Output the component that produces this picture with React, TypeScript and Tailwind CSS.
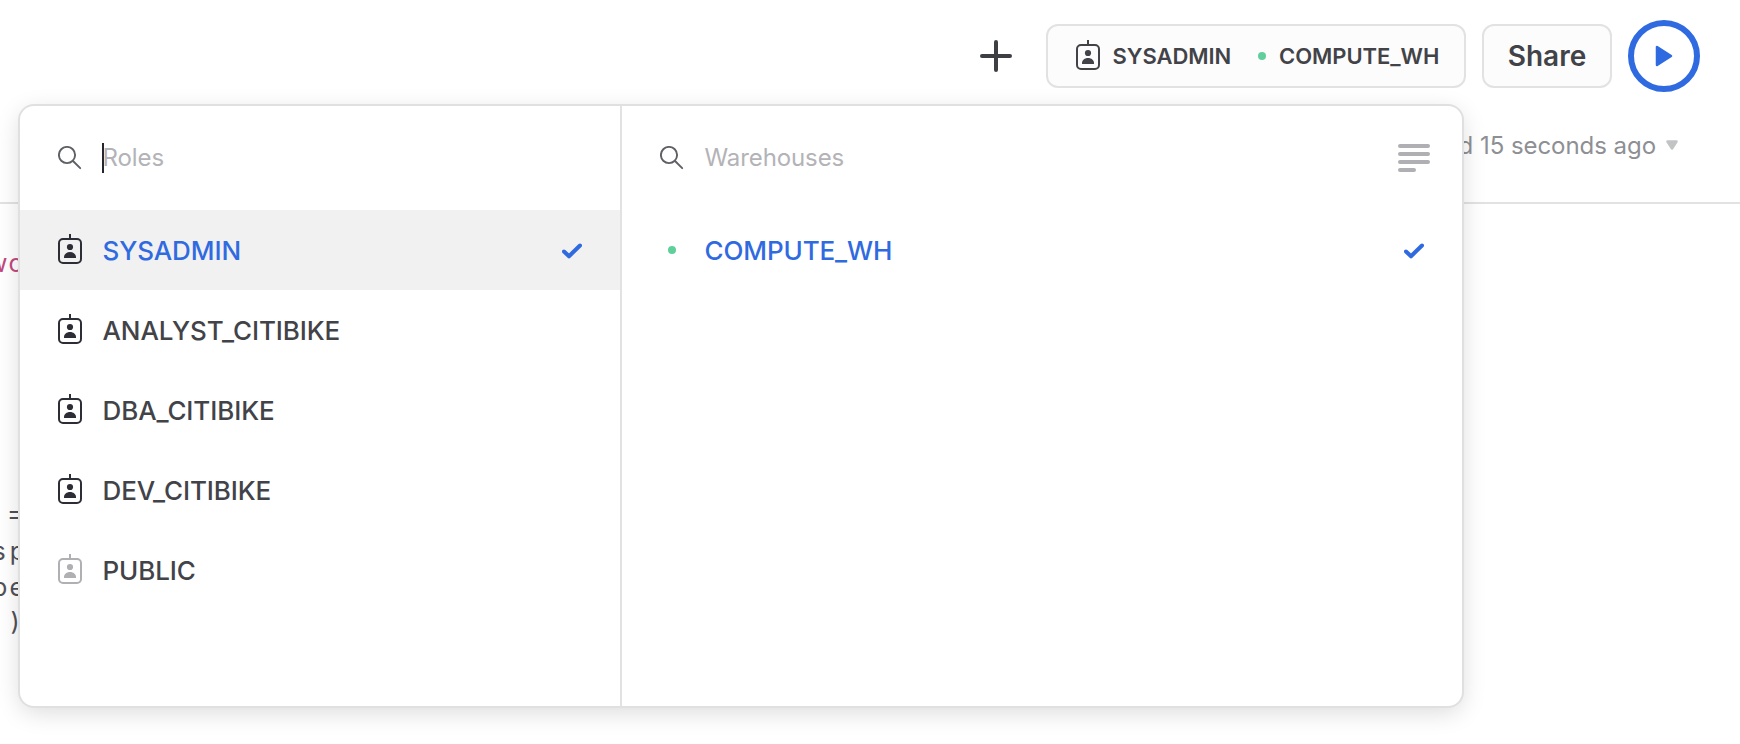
type Role = { name: string; selected?: boolean; muted?: boolean };

const roles: Role[] = [
  { name: "SYSADMIN", selected: true },
  { name: "ANALYST_CITIBIKE" },
  { name: "DBA_CITIBIKE" },
  { name: "DEV_CITIBIKE" },
  { name: "PUBLIC", muted: true },
];

function BadgeIcon({ className = "" }: { className?: string }) {
  return (
    <svg className={`shrink-0 ${className}`} width="24" height="30" viewBox="0 0 24 30" fill="none">
      <rect x="1" y="5" width="22" height="24" rx="4" stroke="currentColor" strokeWidth="2" />
      <path d="M12 0v5" stroke="currentColor" strokeWidth="2" />
      <circle cx="12" cy="13" r="3.1" fill="currentColor" />
      <path d="M6 24v-1c0-2.800 2.600-5 6-5s6 2.200 6 5v1z" fill="currentColor" />
    </svg>
  );
}

function SearchIcon() {
  return (
    <svg className="shrink-0 text-[#5f6066]" width="24" height="24" viewBox="0 0 24 24" fill="none">
      <circle cx="9" cy="9" r="8.100" stroke="currentColor" strokeWidth="1.900" />
      <path d="M15 15l7.200 7.200" stroke="currentColor" strokeWidth="1.900" strokeLinecap="round" />
    </svg>
  );
}

function CheckIcon() {
  return (
    <svg className="mt-px shrink-0 text-[#2f6ae1]" width="20" height="16" viewBox="0 0 20 16" fill="none">
      <path d="M2 8.500l5 4.800L18 2.500" stroke="currentColor" strokeWidth="4" strokeLinecap="round" strokeLinejoin="round" />
    </svg>
  );
}

function Dot() {
  return <span className="size-2 shrink-0 rounded-full bg-[#61cf9c]" />;
}

function Header() {
  return (
    <header className="flex h-28 items-center justify-end pr-10">
      <svg className="mr-[34px] text-[#3e3f45]" width="32" height="32" viewBox="0 0 32 32" fill="none">
        <path d="M16 2v28M2 16h28" stroke="currentColor" strokeWidth="4" strokeLinecap="round" />
      </svg>
      <button className="mr-4 flex h-16 w-[420px] items-center rounded-xl border-2 border-[#e2e2e2] bg-[#fcfcfc] pl-7 text-[22px] font-semibold tracking-[-0.05px]">
        <BadgeIcon className="-mt-0.5" />
        <span className="ml-[12.5px] w-[145.5px] text-left">SYSADMIN</span>
        <Dot />
        <span className="ml-[13px]">COMPUTE_WH</span>
      </button>
      <button className="mr-4 h-16 w-[130px] rounded-xl border-2 border-[#e2e2e2] bg-[#fcfcfc] text-[28px] font-semibold">
        Share
      </button>
      <button className="flex size-[72px] items-center justify-center rounded-full border-6 border-[#2f6ae1] bg-white">
        <svg width="18" height="22" viewBox="0 0 18 22" className="text-[#2f6ae1]">
          <path d="M2 2v18L16 11z" fill="currentColor" stroke="currentColor" strokeWidth="2.500" strokeLinejoin="round" />
        </svg>
      </button>
    </header>
  );
}

function Menu() {
  return (
    <div className="absolute top-[106px] left-5 flex h-[600px] w-[1442px] overflow-hidden rounded-[14px] bg-white shadow-[0_0_0_2px_#e0e0e0,0_6px_24px_rgba(0,0,0,0.15)]">
      <section className="w-[602px] border-r-2 border-[#e2e2e2]">
        <div className="flex h-[104px] items-center pl-[38px]">
          <SearchIcon />
          <span className="-mr-[1.5px] ml-5 h-[30px] w-0.5 bg-[#25262c]" />
          <span className="text-2xl tracking-[-0.1px] text-[#b3b3b7]">Roles</span>
        </div>
        {roles.map((r) => (
          <div key={r.name} className={`flex h-20 items-center pr-[38px] pl-[38px] ${r.selected ? "bg-[#f1f1f1]" : ""}`}>
            <BadgeIcon className={r.muted ? "-mt-0.5 text-[#b0b0b4]" : "-mt-0.5 text-[#2d2e35]"} />
            <span className={`ml-[20.5px] flex-1 text-[26px] font-medium tracking-[-0.1px] ${r.selected ? "text-[#2f6ae1]" : ""}`}>
              {r.name}
            </span>
            {r.selected && <CheckIcon />}
          </div>
        ))}
      </section>
      <section className="flex-1">
        <div className="flex h-[104px] items-center pr-8 pl-[38px]">
          <SearchIcon />
          <span className="ml-[20.5px] flex-1 text-2xl tracking-[-0.1px] text-[#b3b3b7]">Warehouses</span>
          <span className="flex w-8 flex-col gap-1">
            <i className="h-1 w-8 rounded-full bg-[#b0b0b4]" />
            <i className="h-1 w-8 rounded-full bg-[#b0b0b4]" />
            <i className="h-1 w-8 rounded-full bg-[#b0b0b4]" />
            <i className="h-1 w-[18px] rounded-full bg-[#b0b0b4]" />
          </span>
        </div>
        <div className="flex h-20 items-center pr-[38px] pl-[46px]">
          <Dot />
          <span className="ml-[28.5px] flex-1 text-[26px] font-medium tracking-[-0.1px] text-[#2f6ae1]">COMPUTE_WH</span>
          <CheckIcon />
        </div>
      </section>
    </div>
  );
}

export default function App() {
  return (
    <div className="relative h-[744px] w-[1740px] overflow-hidden bg-white font-['Inter',sans-serif] text-[#424348]">
      <Header />
      <div className="flex h-[92px] items-start justify-end border-b-2 border-[#e2e2e2] pt-[18px] pr-[62px] text-2xl text-[#8e8f94]">
        <span className="tracking-[-0.05px]">Updated 15 seconds ago</span>
        <svg className="mt-[10px] ml-[10px] text-[#c2c3c5]" width="12" height="10" viewBox="0 0 12 10">
          <path d="M1.500 1.500h9L6 8.500z" fill="currentColor" stroke="currentColor" strokeWidth="2.500" strokeLinejoin="round" />
        </svg>
      </div>
      <div className="flex w-[25px] flex-col items-end pt-[41px] text-[25px] leading-9 tracking-[1.500px] text-[#505158]">
        <span className="mb-[214px] text-[#c2487f]">wo</span>
        <span className="mb-0.5">=</span>
        <span className="-mr-1 tracking-[4px]">sp</span>
        <span className="-mr-px tracking-[2px]">pe</span>
        <span className="-mt-0.5 mr-1">)</span>
      </div>
      <Menu />
    </div>
  );
}
